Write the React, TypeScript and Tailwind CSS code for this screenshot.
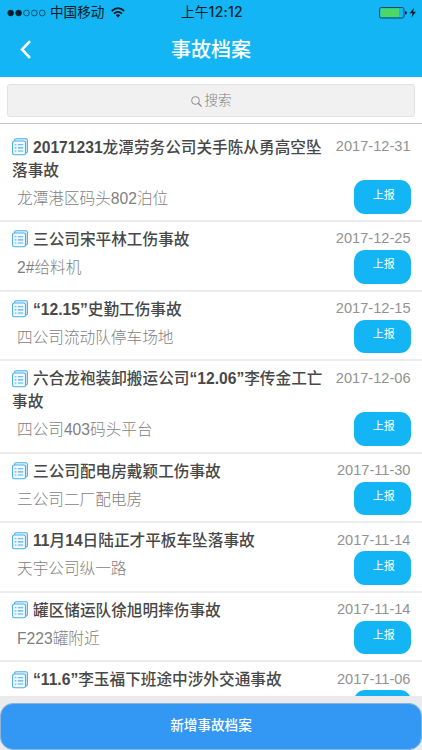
import React from "react";

type Accident = { title: string[]; place: string; date: string; action?: string };

const accidents: Accident[] = [
  { title: ["20171231龙潭劳务公司关手陈从勇高空坠", "落事故"], place: "龙潭港区码头802泊位", date: "2017-12-31", action: "上报" },
  { title: ["三公司宋平林工伤事故"], place: "2#给料机", date: "2017-12-25", action: "上报" },
  { title: ["“12.15”史勤工伤事故"], place: "四公司流动队停车场地", date: "2017-12-15", action: "上报" },
  { title: ["六合龙袍装卸搬运公司“12.06”李传金工亡", "事故"], place: "四公司403码头平台", date: "2017-12-06", action: "上报" },
  { title: ["三公司配电房戴颖工伤事故"], place: "三公司二厂配电房", date: "2017-11-30", action: "上报" },
  { title: ["11月14日陆正才平板车坠落事故"], place: "天宇公司纵一路", date: "2017-11-14", action: "上报" },
  { title: ["罐区储运队徐旭明摔伤事故"], place: "F223罐附近", date: "2017-11-14", action: "上报" },
  { title: ["“11.6”李玉福下班途中涉外交通事故"], place: "", date: "2017-11-06" },
];

// Latin runs are bold, Chinese runs are medium.
function Mixed({ text }: { text: string }) {
  const runs = text.split(/([“”0-9.]+)/).filter(Boolean);
  return (
    <>
      {runs.map((run, i) => (
        <span key={i} className={/^[“”0-9.]/.test(run) ? "font-bold" : "font-medium"}>
          {run}
        </span>
      ))}
    </>
  );
}

function RecordIcon() {
  return (
    <svg className="mr-[5px] h-[18px] w-4 shrink-0" viewBox="0 0 16 18" fill="none" stroke="#4aaeea" strokeWidth="1.1">
      <path d="M2.6 3V2Q2.6 .7 4 .7H13.8Q15.4 .7 15.4 2.3V13.5Q15.4 15 13.8 15.1" fill="#e3f3fd" />
      <rect x="0.6" y="3" width="12.9" height="13.7" rx="1.8" fill="#f3faff" />
      <path d="M2.8 6.8h1.6M5.8 6.8h5.4M2.8 9.9h1.6M5.8 9.9h5.4M2.8 13h1.6M5.8 13h5.4" />
    </svg>
  );
}

function Row({ item }: { item: Accident }) {
  const height = item.title.length > 1 ? "h-[92.4px]" : "h-[69.6px]";
  return (
    <li className={`flex shrink-0 justify-between border-b-2 border-[#ececee] pr-[11.5px] pl-3 ${height}`}>
      <div className="pt-[6px] whitespace-nowrap">
        <h2 className="text-[15.65px] leading-[23px] text-[#484848]">
          {item.title.map((line, i) => (
            <span key={line} className="flex items-center">
              {i === 0 && <RecordIcon />}
              <span><Mixed text={line} /></span>
            </span>
          ))}
        </h2>
        <p className="mt-[5px] pl-[5px] text-[15.65px] leading-[23px] font-light text-[#7f7f7f]">{item.place}</p>
      </div>
      <div className="flex flex-col items-end justify-between pb-[6px]">
        <time className="pt-[5.4px] text-[14.6px] leading-[22px] text-[#929292]">{item.date}</time>
        <button className="h-[33.5px] w-[56.5px] shrink-0 rounded-[11px] bg-[#13b5f4] pb-[5px] pl-[3px] text-[11px] leading-[16px] text-white">
          {item.action}
        </button>
      </div>
    </li>
  );
}

function StatusBar() {
  return (
    <div className="grid h-6 grid-cols-3 items-center text-[14px] leading-6 text-[#071d29]">
      <div className="flex items-center whitespace-nowrap">
        <svg className="ml-[7px] h-2 w-[39px]" viewBox="0 0 39 8" stroke="#082c3c" strokeWidth="0.7" fill="none">
          <circle cx="3.7" cy="4" r="2.9" fill="#071d29" />
          <circle cx="11.6" cy="4" r="2.9" fill="#071d29" />
          <circle cx="19.5" cy="4" r="2.9" />
          <circle cx="27.3" cy="4" r="2.9" />
          <circle cx="35.2" cy="4" r="2.9" />
        </svg>
        <span className="ml-1 text-[13.6px]">中国移动</span>
        <svg className="ml-[7px] h-[11px] w-[14px]" viewBox="0 0 14 11" fill="none" stroke="#071d29" strokeWidth="1.7">
          <path d="M.7 4Q7-1.6 13.3 4M3 6.6Q7 3.1 11 6.6" />
          <path d="M4.8 8.2Q7 6.5 9.2 8.2L7 10.7Z" fill="#071d29" stroke="none" />
        </svg>
      </div>
      <div className="pl-[2px] text-center whitespace-nowrap">
        <span className="text-[13.8px]">上午</span>
        <span className="font-[Inter] text-[14px] font-medium tracking-[0.25px]">12:12</span>
      </div>
      <svg className="mr-[5px] h-3 w-[38px] justify-self-end" viewBox="0 0 38 12" fill="none">
        <rect x="0.5" y="0.5" width="24.5" height="10.5" rx="1.8" stroke="#17475c" />
        <path d="M1.5 1.5H20V10H1.5Z" fill="#4bd964" />
        <path d="M26 4Q28 4 28 5.8T26 7.6Z" fill="#071d29" />
        <path d="M35 .7L30.7 6.2H33.5L32.5 10.5L37 4.8H34.1Z" fill="#071d29" />
      </svg>
    </div>
  );
}

export default function App() {
  return (
    <div className="flex h-[750px] w-[422px] flex-col overflow-hidden bg-white font-['Liberation_Sans','Noto_Sans_CJK_SC',sans-serif]">
      <header className="h-[77px] shrink-0 bg-[#13b5f4]">
        <StatusBar />
        <div className="grid h-[51px] grid-cols-[60px_1fr_60px] items-center">
          <svg className="ml-5 h-[19px] w-3" viewBox="0 0 12 19" fill="none" stroke="white" strokeWidth="2.6">
            <path d="M10 1.2L2 9.5L10 17.8" />
          </svg>
          <h1 className="text-center text-[20px] leading-[30px] font-medium text-white">事故档案</h1>
        </div>
      </header>
      <div className="h-[47px] shrink-0 border-b border-[#c7c7c7] px-[7px] pt-[7px]">
        <div className="flex h-[33px] items-center justify-center gap-[3px] rounded-[3px] border border-[#e1e1e1] bg-[#f1f1f1] pt-px text-[13.5px] font-light text-[#7f7f7f]">
          <svg className="h-[11px] w-[11px]" viewBox="0 0 11 11" fill="none" stroke="#8c8c8c" strokeWidth="1">
            <circle cx="4.5" cy="4.5" r="3.9" />
            <path d="M7.3 7.3L10.5 10.5" strokeWidth="1.3" />
          </svg>
          <span>搜索</span>
        </div>
      </div>
      <ul className="flex min-h-0 flex-1 flex-col overflow-hidden pt-[5.6px]">
        {accidents.map((item) => (
          <Row key={item.title[0]} item={item} />
        ))}
      </ul>
      <footer className="h-[54px] shrink-0 bg-[#ebebed] pt-[7px]">
        <button className="h-[47px] w-full rounded-[13px] border border-[#8bb4d8] bg-[#3398f3] text-[13.6px] font-medium text-white">
          新增事故档案
        </button>
      </footer>
    </div>
  );
}
